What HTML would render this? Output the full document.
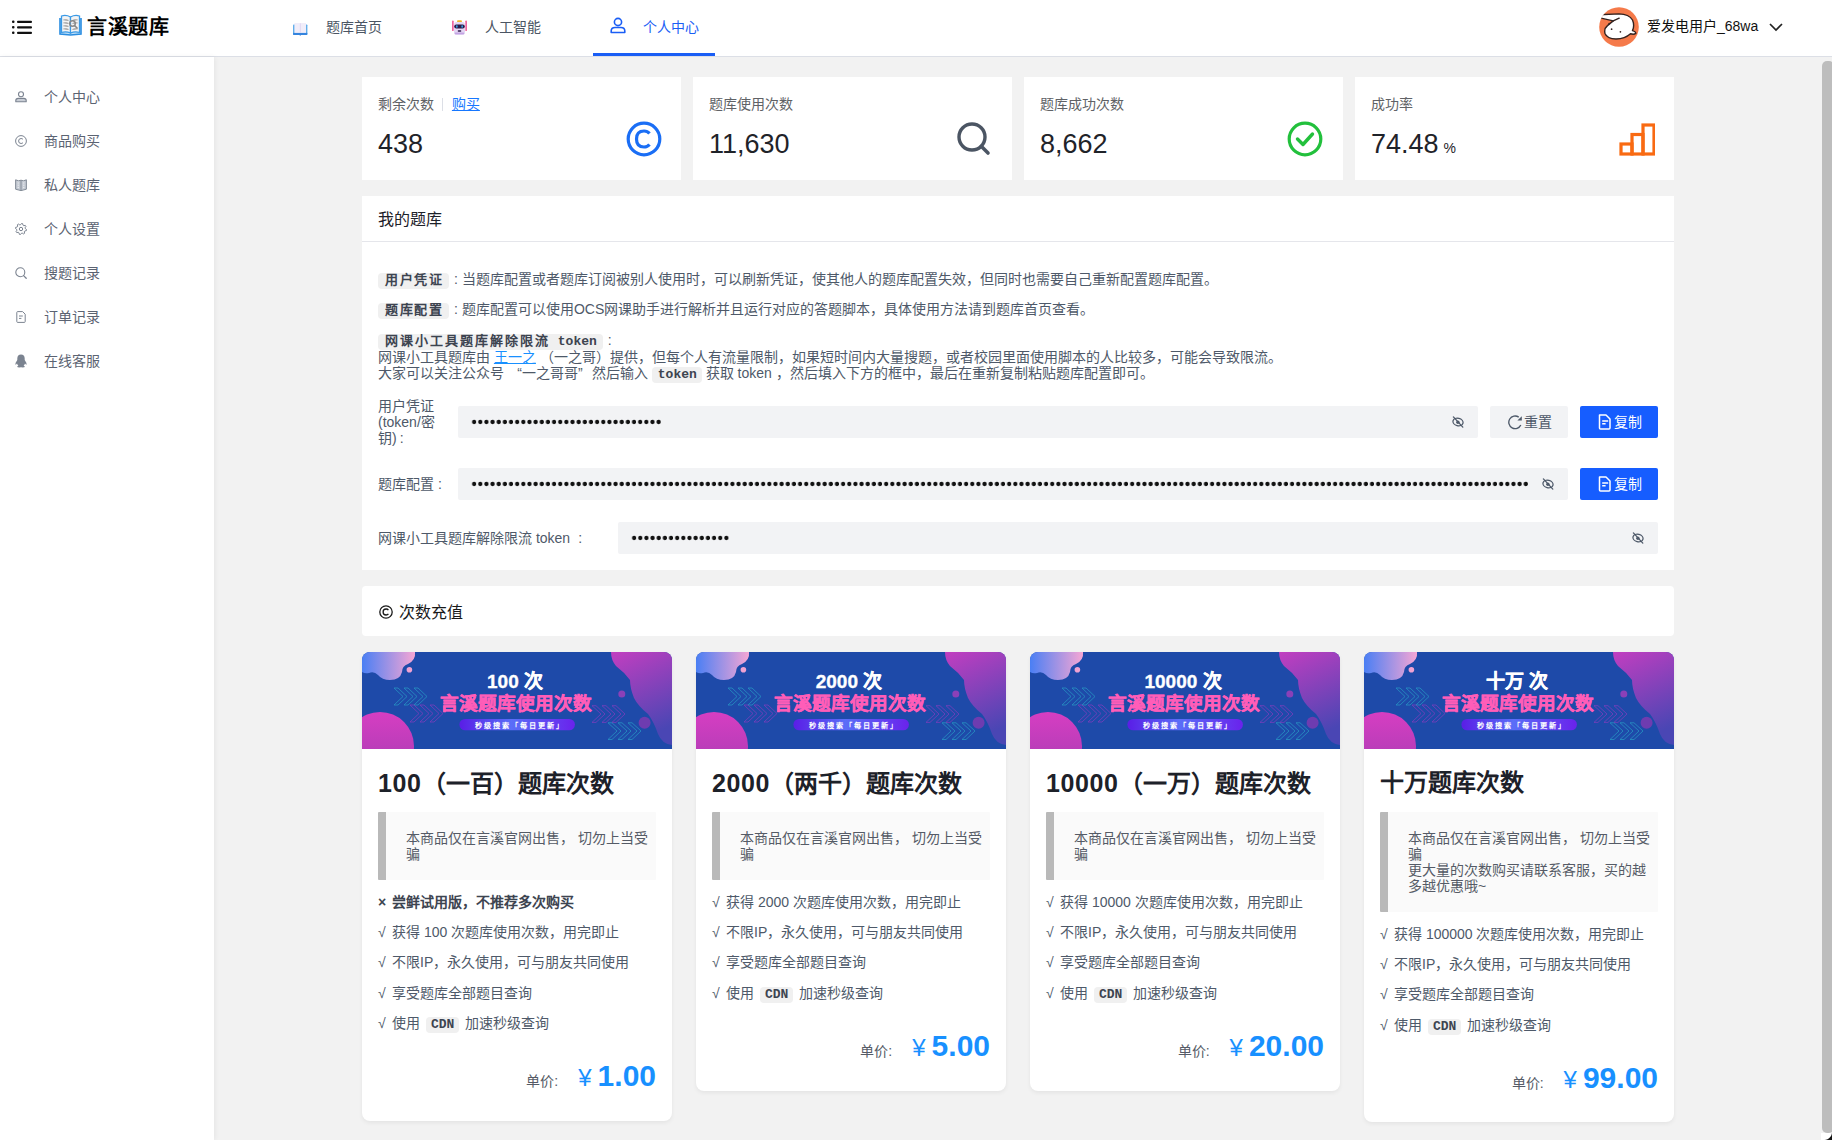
<!DOCTYPE html>
<html lang="zh-CN"><head><meta charset="utf-8">
<style>
*{box-sizing:border-box;margin:0;padding:0}
html,body{width:1832px;height:1140px;overflow:hidden;background:#f2f2f2;font-family:"Liberation Sans",sans-serif;color:#303133}
.abs{position:absolute}
#hdr{position:absolute;left:0;top:0;width:1832px;height:57px;background:#fff;border-bottom:1px solid #dcdfe6}
#side{position:absolute;left:0;top:57px;width:214px;height:1083px;background:#fff;box-shadow:1px 0 5px rgba(0,0,0,0.06)}
.nav{position:absolute;top:0;height:56px;font-size:14px;color:#4b5563;line-height:54px;white-space:nowrap}
.sitem{position:absolute;left:0;width:214px;height:44px;font-size:14px;color:#5b6372;line-height:44px}
.sitem svg{position:absolute;left:15px;top:16px}
.sitem span{position:absolute;left:44px;top:0}
.card{position:absolute;background:#fff}
.stat .lbl{position:absolute;left:16px;top:19px;font-size:14px;color:#606266;line-height:16px;white-space:nowrap}
.stat .val{position:absolute;left:16px;top:51px;font-size:27px;color:#1f2329;line-height:32px;white-space:nowrap}
.stat svg{position:absolute}

.para{position:absolute;left:16px;font-size:14px;color:#4e5969;line-height:16px;white-space:nowrap}
.pill{display:inline-block;background:#f0f0f0;border-radius:4px;font-weight:bold;font-size:13px;letter-spacing:1.5px;padding:0 6px 0 7px;line-height:16px;color:#3d4450;font-family:"Liberation Mono",monospace}
.flbl{position:absolute;left:16px;font-size:14px;color:#4e5969;line-height:16px}
.inp{position:absolute;height:32px;background:#f2f3f5;border-radius:2px}
.dots{position:absolute;left:14px;top:0;line-height:32px;font-size:12px;color:#111;letter-spacing:-0.5px;white-space:nowrap;overflow:hidden}
.eye{position:absolute;top:10px;height:12px}
.eye svg{display:block}
.btn{position:absolute;height:32px;width:78px;border-radius:2px;font-size:14px;line-height:32px;white-space:nowrap}
.btn.blue{background:#165dff;color:#fff}
.btn.grey{background:#f2f3f5;color:#4e5969}

.pcard{position:absolute;top:652px;width:310px;background:#fff;border-radius:8px;box-shadow:0 2px 4px rgba(0,0,0,0.06);overflow:hidden}
.pcard .ban{position:absolute;left:0;top:0;width:310px;height:97px}
.pcard .ttl{position:absolute;left:16px;top:116px;font-size:24px;font-weight:bold;color:#1d2129;line-height:30px;white-space:nowrap}
.pcard .quote{position:absolute;left:16px;top:160px;width:278px;background:#fafafa;border-left:8px solid #b9b9b9;padding:18px 0 18px 20px;font-size:14px;line-height:16px;color:#555b66;border-radius:1px}
.pcard .ck{display:inline-block;width:14px}
.pcard .li{position:absolute;left:16px;font-size:14px;color:#4e5969;line-height:18px;white-space:nowrap}
.pcard .cdn{display:inline-block;background:#f0f0f0;border-radius:4px;font-family:"Liberation Mono",monospace;font-weight:bold;font-size:13px;line-height:16px;padding:0 5px;color:#3d4450;margin:0 2px}
.pcard .price{position:absolute;right:16px;white-space:nowrap;line-height:34px;font-size:30px;height:34px}
.pcard .price .u{font-size:14px;color:#555b66;margin-right:20px}
.pcard .price .y{font-size:24px;color:#1890ff;margin-right:6px}
.pcard .price .n{font-size:30px;font-weight:bold;color:#1890ff}
</style></head><body>

<!-- HEADER -->
<div id="hdr">
  <svg class="abs" style="left:12px;top:20px" width="20" height="15" viewBox="0 0 20 15"><g fill="#111"><rect x="0" y="0.5" width="2.5" height="2.5" rx="1"/><rect x="0" y="6" width="2.5" height="2.5" rx="1"/><rect x="0" y="11.5" width="2.5" height="2.5" rx="1"/><rect x="5" y="0.7" width="15" height="2.2" rx="1"/><rect x="5" y="6.2" width="15" height="2.2" rx="1"/><rect x="5" y="11.7" width="15" height="2.2" rx="1"/></g></svg>
  <svg class="abs" style="left:59px;top:14px" width="23" height="22" viewBox="0 0 23 22"><path d="M1 4 L1 20 L11.5 21 L22 20 L22 4" fill="#bfe0f7" stroke="#2a8de0" stroke-width="1.6"/><path d="M2.5 2 Q7 0.5 11.5 3 L11.5 19 Q7 17 2.5 18.5 Z" fill="#f4f4f4" stroke="#3b9ae6" stroke-width="1.3"/><path d="M20.5 2 Q16 0.5 11.5 3 L11.5 19 Q16 17 20.5 18.5 Z" fill="#f4f4f4" stroke="#3b9ae6" stroke-width="1.3"/><g stroke="#c8c8c8" stroke-width="0.9"><path d="M4 6 Q7 5 10 6.5M4 9 Q7 8 10 9.5M4 12 Q7 11 10 12.5M4 15 Q7 14 10 15.5M13 6.5 Q16 5 19 6M13 9.5Q16 8 19 9M13 15.5 Q16 14 19 15"/></g><circle cx="13.5" cy="9.5" r="2.8" fill="none" stroke="#888" stroke-width="1.4"/><path d="M15.5 11.5 L18.5 14.5" stroke="#888" stroke-width="1.6"/></svg>
  <div class="abs" style="left:87px;top:14px;font-size:20px;font-weight:bold;color:#000;line-height:26px;letter-spacing:0.5px">言溪题库</div>

  <div class="nav" style="left:292px">
    <svg class="abs" style="left:0.5px;top:22.5px" width="15" height="13" viewBox="0 0 15 13"><rect x="0" y="1.4" width="14.4" height="10.4" rx="0.8" fill="#62aeea"/><rect x="0" y="9.8" width="14.4" height="2.2" rx="0.8" fill="#3584de"/><rect x="1.4" y="0" width="11.6" height="9.9" fill="#f1edf9"/><rect x="6.9" y="0.3" width="0.7" height="9.4" fill="#d9d0ef"/><path d="M6.5 11.9 L7.2 12.9 L7.9 11.9Z" fill="#3584de"/></svg>
    <span class="abs" style="left:34px">题库首页</span>
  </div>
  <div class="nav" style="left:452px">
    <svg class="abs" style="left:-0.5px;top:19.5px" width="15" height="15" viewBox="0 0 15 15"><rect x="0" y="0.4" width="1.7" height="10.6" rx="0.85" fill="#f0649e"/><rect x="13.3" y="0.4" width="1.7" height="10.6" rx="0.85" fill="#f0649e"/><rect x="5" y="0.2" width="5" height="2.2" rx="1.1" fill="#f3b52a"/><rect x="2" y="2" width="11" height="12.4" rx="2.6" fill="#e4d6f3"/><rect x="2.6" y="12.6" width="9.8" height="1.8" rx="0.9" fill="#c3a3e3"/><rect x="2.2" y="4.4" width="10.6" height="4.2" rx="2.1" fill="#2d1a48"/><rect x="4.1" y="5.3" width="1.5" height="2.4" rx="0.7" fill="#36aef0"/><rect x="9.4" y="5.3" width="1.5" height="2.4" rx="0.7" fill="#36aef0"/><rect x="5.7" y="10.3" width="3.6" height="1.4" rx="0.7" fill="#2d1a48"/></svg>
    <span class="abs" style="left:33px">人工智能</span>
  </div>
  <div class="nav" style="left:593px;width:122px;color:#1a5ef5">
    <svg class="abs" style="left:17px;top:17px" width="16" height="17" viewBox="0 0 16 17"><circle cx="8" cy="5" r="3.6" fill="none" stroke="#1a5ef5" stroke-width="1.6"/><path d="M1.2 15.5 L1.2 14 Q1.2 10.5 5 10.5 L11 10.5 Q14.8 10.5 14.8 14 L14.8 15.5 Z" fill="none" stroke="#1a5ef5" stroke-width="1.6" stroke-linejoin="round"/></svg>
    <span class="abs" style="left:50px">个人中心</span>
    <div class="abs" style="left:0;top:53px;width:122px;height:3px;background:#1a5ef5"></div>
  </div>

  <svg class="abs" style="left:1599px;top:6.5px" width="40" height="40" viewBox="0 0 40 40"><defs><clipPath id="avc"><circle cx="20" cy="20" r="19.8"/></clipPath></defs><circle cx="20" cy="20" r="19.8" fill="#f57a4a"/><g clip-path="url(#avc)" stroke="#33221f" stroke-width="1.4" stroke-linejoin="round" stroke-linecap="round"><path d="M-1 7.8 L20 6.9 Q30 7.2 33.5 13 Q35.8 18.5 33.5 23.6 Q36.5 24.3 36.9 26.2 Q35.2 27.8 31.5 26.8 Q26 31.8 17 32 Q8 31.8 6 26.5 Q4.8 21.5 8.5 18.6 L14.2 13.9 L-1 10.4 Z" fill="#fff"/><path d="M14.2 13.9 L20.2 11.2" fill="none"/><circle cx="10.2" cy="16.6" r="0.9" fill="#33221f" stroke="none"/><circle cx="12.6" cy="22.2" r="0.85" fill="#33221f" stroke="none"/><circle cx="21.4" cy="24.8" r="0.85" fill="#33221f" stroke="none"/></g></svg>
  <div class="abs" style="left:1647px;top:18px;font-size:14px;line-height:17px;color:#111;white-space:nowrap">爱发电用户_68wa</div>
  <svg class="abs" style="left:1769px;top:22px" width="14" height="10" viewBox="0 0 14 10"><path d="M1 2 L7 8 L13 2" fill="none" stroke="#222" stroke-width="1.7"/></svg>
</div>

<!-- SIDEBAR -->
<div id="side">
  <div class="sitem" style="top:18px"><svg width="12" height="12" viewBox="0 0 12 12"><circle cx="6" cy="3.2" r="2.5" fill="none" stroke="#7b8390" stroke-width="1.1"/><path d="M0.8 10.8 L0.8 9.6 Q0.8 7.4 3.2 7.4 L8.8 7.4 Q11.2 7.4 11.2 9.6 L11.2 10.8 Z" fill="#c9ced6" stroke="#7b8390" stroke-width="1.1" stroke-linejoin="round"/></svg><span>个人中心</span></div>
  <div class="sitem" style="top:62px"><svg width="12" height="12" viewBox="0 0 12 12"><circle cx="6" cy="6" r="5.4" fill="none" stroke="#7b8390" stroke-width="1"/><path d="M8 4.4 Q7.3 3.5 6.1 3.5 Q3.6 3.5 3.6 6 Q3.6 8.5 6.1 8.5 Q7.3 8.5 8 7.6" fill="none" stroke="#7b8390" stroke-width="1"/></svg><span>商品购买</span></div>
  <div class="sitem" style="top:106px"><svg width="12" height="12" viewBox="0 0 12 12"><path d="M0.6 0.8 L3.5 1.8 L6 1.2 L8.5 1.8 L11.4 0.8 L11.4 10.2 L8.5 11 L6 11.6 L3.5 11 L0.6 10.2 Z" fill="#c3c9d2" stroke="#7b8390" stroke-width="0.9" stroke-linejoin="round"/><path d="M6 1.4 L6 11.4" stroke="#7b8390" stroke-width="0.9"/><path d="M3.2 2.6 L3.2 10 M8.8 2.6 L8.8 10" stroke="#fff" stroke-width="0.8" stroke-dasharray="1 0.8"/></svg><span>私人题库</span></div>
  <div class="sitem" style="top:150px"><svg width="12" height="12" viewBox="0 0 12 12"><path d="M6.55 0.43 L7.63 0.64 L8.03 2.21 L8.73 2.68 L10.33 2.45 L10.94 3.36 L10.11 4.75 L10.28 5.58 L11.57 6.55 L11.36 7.63 L9.79 8.03 L9.32 8.73 L9.55 10.33 L8.64 10.94 L7.25 10.11 L6.42 10.28 L5.45 11.57 L4.37 11.36 L3.97 9.79 L3.27 9.32 L1.67 9.55 L1.06 8.64 L1.89 7.25 L1.72 6.42 L0.43 5.45 L0.64 4.37 L2.21 3.97 L2.68 3.27 L2.45 1.67 L3.36 1.06 L4.75 1.89 L5.58 1.72Z" fill="none" stroke="#7b8390" stroke-width="1" stroke-linejoin="round"/><circle cx="6" cy="6" r="1.7" fill="none" stroke="#7b8390" stroke-width="1"/></svg><span>个人设置</span></div>
  <div class="sitem" style="top:194px"><svg width="12" height="12" viewBox="0 0 12 12"><circle cx="5.3" cy="5.3" r="4.5" fill="none" stroke="#7b8390" stroke-width="1.1"/><path d="M8.6 8.6 L11.2 11.2" stroke="#7b8390" stroke-width="1.3" stroke-linecap="round"/></svg><span>搜题记录</span></div>
  <div class="sitem" style="top:238px"><svg width="12" height="12" viewBox="0 0 12 12"><path d="M1.8 1.4 Q1.8 0.6 2.6 0.6 L7.6 0.6 L10.2 3.2 L10.2 10.6 Q10.2 11.4 9.4 11.4 L2.6 11.4 Q1.8 11.4 1.8 10.6 Z" fill="none" stroke="#7b8390" stroke-width="1" stroke-linejoin="round"/><path d="M4 5 L7.8 5 M4 7.4 L6.4 7.4" stroke="#7b8390" stroke-width="1"/></svg><span>订单记录</span></div>
  <div class="sitem" style="top:282px"><svg width="12" height="14" viewBox="0 0 12 14" style="top:15px"><path d="M6 0.4 Q9.6 0.4 9.7 4.6 L9.7 6 Q11.9 8.8 11.5 11 Q10.6 10.5 10 9.6 Q9.6 11 8.6 11.8 Q10 12.3 9.8 13 Q9 13.6 6 13.3 Q3 13.6 2.2 13 Q2 12.3 3.4 11.8 Q2.4 11 2 9.6 Q1.4 10.5 0.5 11 Q0.1 8.8 2.3 6 L2.3 4.6 Q2.4 0.4 6 0.4Z" fill="#7b8390"/></svg><span>在线客服</span></div>
</div>

<!-- STAT CARDS -->
<div class="card stat" style="left:362px;top:77px;width:319px;height:103px">
  <div class="lbl">剩余次数 <span style="display:inline-block;width:1px;height:13px;background:#dcdfe6;margin:0 9px 0 4px;vertical-align:-2px"></span><span style="color:#1677ff;text-decoration:underline">购买</span></div>
  <div class="val">438</div>
  <svg style="left:264px;top:44px" width="36" height="36" viewBox="0 0 36 36"><circle cx="18" cy="18" r="15.8" fill="none" stroke="#1a6ef5" stroke-width="3.2"/><path d="M23.5 12.5 Q21.5 10 18 10 Q10.5 10 10.5 18 Q10.5 26 18 26 Q21.5 26 23.5 23.5" fill="none" stroke="#1a6ef5" stroke-width="3.2"/></svg>
</div>
<div class="card stat" style="left:693px;top:77px;width:319px;height:103px">
  <div class="lbl">题库使用次数</div>
  <div class="val">11,630</div>
  <svg style="left:263px;top:44px" width="36" height="36" viewBox="0 0 36 36"><circle cx="16" cy="16" r="13" fill="none" stroke="#4b5563" stroke-width="3.4"/><path d="M25.5 25.5 L32 32" stroke="#4b5563" stroke-width="3.6" stroke-linecap="round"/></svg>
</div>
<div class="card stat" style="left:1024px;top:77px;width:319px;height:103px">
  <div class="lbl">题库成功次数</div>
  <div class="val">8,662</div>
  <svg style="left:263px;top:44px" width="36" height="36" viewBox="0 0 36 36"><circle cx="18" cy="18" r="15.8" fill="none" stroke="#22c03c" stroke-width="3.2"/><path d="M10.5 18 L16 23.5 L25.5 13" fill="none" stroke="#22c03c" stroke-width="3.4" stroke-linecap="round" stroke-linejoin="round"/></svg>
</div>
<div class="card stat" style="left:1355px;top:77px;width:319px;height:103px">
  <div class="lbl">成功率</div>
  <div class="val">74.48<span style="font-size:14px;margin-left:5px">%</span></div>
  <svg style="left:264px;top:44px" width="36" height="36" viewBox="0 0 36 36"><g fill="none" stroke="#f96a12" stroke-width="3.2"><rect x="2" y="23" width="11" height="10"/><rect x="13" y="13.5" width="11" height="19.5"/><rect x="24" y="4" width="11" height="29"/></g></svg>
</div>


<!-- MY BANK CARD -->
<div class="card" style="left:362px;top:196px;width:1312px;height:374px">
  <div class="abs" style="left:16px;top:14px;font-size:16px;line-height:20px;color:#1d2129">我的题库</div>
  <div class="abs" style="left:0;top:45px;width:1312px;height:1px;background:#e5e6eb"></div>
  <div class="para" style="top:75px"><span class="pill">用户凭证</span><span style="margin:0 4px 0 5px">:</span>当题库配置或者题库订阅被别人使用时，可以刷新凭证，使其他人的题库配置失效，但同时也需要自己重新配置题库配置。</div>
  <div class="para" style="top:105px"><span class="pill">题库配置</span><span style="margin:0 4px 0 5px">:</span>题库配置可以使用OCS网课助手进行解析并且运行对应的答题脚本，具体使用方法请到题库首页查看。</div>
  <div class="para" style="top:136px"><span class="pill" style="letter-spacing:2px">网课小工具题库解除限流<span style="letter-spacing:0"> token</span></span><span style="margin:0 4px 0 5px">:</span></div>
  <div class="para" style="top:153px">网课小工具题库由 <span style="color:#1890ff;text-decoration:underline">王一之</span> （一之哥）提供，但每个人有流量限制，如果短时间内大量搜题，或者校园里面使用脚本的人比较多，可能会导致限流。</div>
  <div class="para" style="top:169px">大家可以关注公众号 <span style="display:inline-block;width:14px;text-align:right">“</span>一之哥哥<span style="display:inline-block;width:14px;text-align:left">”</span>然后输入 <span class="pill" style="letter-spacing:0;padding:0 5px 0 6px">token</span> 获取 token <span style="display:inline-block;width:14px">，</span>然后填入下方的框中，最后在重新复制粘贴题库配置即可。</div>

  <div class="flbl" style="top:202px">用户凭证<br>(token/密<br>钥)<span style="margin-left:3px">:</span></div>
  <div class="inp" style="left:96px;top:210px;width:1020px"><svg class="abs" style="left:12px;top:0" width="191" height="32"><rect width="191" height="32" fill="url(#dp)"/></svg><div class="eye" style="left:994px"><svg width="12" height="12" viewBox="0 0 12 12"><ellipse cx="6" cy="6" rx="5.1" ry="3.7" transform="rotate(15 6 6)" fill="none" stroke="#4e5969" stroke-width="1.3"/><circle cx="5.9" cy="6.2" r="1.7" fill="#4e5969"/><path d="M1.4 0.9 L10.8 11.1" stroke="#4e5969" stroke-width="1.3" stroke-linecap="round"/></svg></div></div>
  <div class="btn grey" style="left:1128px;top:210px"><svg class="abs" style="left:18px;top:9px" width="15" height="15" viewBox="0 0 15 15"><path d="M12.81 9.96 A6.3 6.3 0 1 1 10.71 2.14" fill="none" stroke="#4e5969" stroke-width="1.35"/><path d="M13.8 1.2 L13.8 5.6 L9.4 5.6 Z" fill="#4e5969"/></svg><span class="abs" style="left:34px">重置</span></div>
  <div class="btn blue" style="left:1218px;top:210px"><svg class="abs" style="left:18px;top:8px" width="13" height="16" viewBox="0 0 13 16"><path d="M1.5 1 L8 1 L12 5 L12 14 Q12 15 11 15 L2.5 15 Q1.5 15 1.5 14 Z" fill="none" stroke="#fff" stroke-width="1.5" stroke-linejoin="round"/><path d="M4.2 6.9 L10.2 6.9 M4.2 9.8 L7.6 9.8" stroke="#fff" stroke-width="1.5"/></svg><span class="abs" style="left:34px">复制</span></div>

  <div class="flbl" style="top:280px">题库配置<span style="margin-left:4px">:</span></div>
  <div class="inp" style="left:96px;top:272px;width:1110px"><svg class="abs" style="left:12px;top:0" width="1058" height="32"><rect width="1058" height="32" fill="url(#dp)"/></svg><div class="eye" style="left:1084px"><svg width="12" height="12" viewBox="0 0 12 12"><ellipse cx="6" cy="6" rx="5.1" ry="3.7" transform="rotate(15 6 6)" fill="none" stroke="#4e5969" stroke-width="1.3"/><circle cx="5.9" cy="6.2" r="1.7" fill="#4e5969"/><path d="M1.4 0.9 L10.8 11.1" stroke="#4e5969" stroke-width="1.3" stroke-linecap="round"/></svg></div></div>
  <div class="btn blue" style="left:1218px;top:272px"><svg class="abs" style="left:18px;top:8px" width="13" height="16" viewBox="0 0 13 16"><path d="M1.5 1 L8 1 L12 5 L12 14 Q12 15 11 15 L2.5 15 Q1.5 15 1.5 14 Z" fill="none" stroke="#fff" stroke-width="1.5" stroke-linejoin="round"/><path d="M4.2 6.9 L10.2 6.9 M4.2 9.8 L7.6 9.8" stroke="#fff" stroke-width="1.5"/></svg><span class="abs" style="left:34px">复制</span></div>

  <div class="flbl" style="top:334px;white-space:nowrap">网课小工具题库解除限流 token<span style="margin-left:8px">:</span></div>
  <div class="inp" style="left:256px;top:326px;width:1040px"><svg class="abs" style="left:12px;top:0" width="99" height="32"><rect width="99" height="32" fill="url(#dp)"/></svg><div class="eye" style="left:1014px"><svg width="12" height="12" viewBox="0 0 12 12"><ellipse cx="6" cy="6" rx="5.1" ry="3.7" transform="rotate(15 6 6)" fill="none" stroke="#4e5969" stroke-width="1.3"/><circle cx="5.9" cy="6.2" r="1.7" fill="#4e5969"/><path d="M1.4 0.9 L10.8 11.1" stroke="#4e5969" stroke-width="1.3" stroke-linecap="round"/></svg></div></div>
</div>

<!-- RECHARGE TITLE -->
<div class="card" style="left:362px;top:586px;width:1312px;height:50px;border-radius:4px">
  <svg class="abs" style="left:17px;top:18.5px" width="14" height="14" viewBox="0 0 14 14"><circle cx="7" cy="7" r="6.2" fill="none" stroke="#1a1a1a" stroke-width="1.3"/><path d="M9.4 5.1 Q8.7 4 7.1 4 Q4.1 4 4.1 7 Q4.1 10 7.1 10 Q8.7 10 9.4 8.9" fill="none" stroke="#1a1a1a" stroke-width="1.3"/></svg><div class="abs" style="left:37px;top:16.5px;font-size:16px;line-height:20px;color:#1a1a1a;white-space:nowrap">次数充值</div>
</div>

<svg width="0" height="0" style="position:absolute">
<defs>
<linearGradient id="gTL" x1="0" y1="0" x2="1" y2="0"><stop offset="0" stop-color="#4a7ff4"/><stop offset="1" stop-color="#f6a6d4"/></linearGradient>
<linearGradient id="gBL" x1="0" y1="0" x2="0" y2="1"><stop offset="0" stop-color="#d63ec2"/><stop offset="1" stop-color="#a43cb2"/></linearGradient>
<linearGradient id="gR" x1="0" y1="0" x2="0.3" y2="1"><stop offset="0" stop-color="#c23ec0"/><stop offset="1" stop-color="#4a46b4"/></linearGradient>
<linearGradient id="gP" x1="0" y1="0" x2="1" y2="0"><stop offset="0" stop-color="#5a1de6"/><stop offset="0.45" stop-color="#5a6ef8"/><stop offset="1" stop-color="#6a22ec"/></linearGradient>
<pattern id="dp" width="6.15" height="32" patternUnits="userSpaceOnUse"><circle cx="4.1" cy="16" r="2.15" fill="#111"/></pattern>
<symbol id="bnr" viewBox="0 0 310 97">
<rect width="310" height="97" fill="#1e4aa9"/>
<path d="M0 0 L53 0 Q54 8 46 12 Q40 14 40 20 Q38 28 28 28 Q20 28 16 23 Q12 19 7 21 Q3 22 0 20 Z" fill="url(#gTL)"/>
<circle cx="47.4" cy="17.7" r="2.8" fill="#f0a2d2"/>
<circle cx="18" cy="94" r="34" fill="url(#gBL)"/>
<path d="M249 0 L310 0 L310 93 Q300 92 296 82 Q292 70 286 62 Q276 54 272 46 Q268 36 268 28 Q262 20 254 14 Q249 8 249 0 Z" fill="url(#gR)"/>
<circle cx="259.8" cy="41.9" r="3.5" fill="#8a40b8"/>
<circle cx="282.6" cy="70.8" r="6" fill="#6e3cb0"/>
<g fill="none" stroke-width="0.8" opacity="0.85">
<path stroke="#2aa0c8" d="M32 36 L41 44.5 L32 53 L36 53 L45 44.5 L36 36 Z M42 36 L51 44.5 L42 53 L46 53 L55 44.5 L46 36 Z M52 36 L61 44.5 L52 53 L56 53 L65 44.5 L56 36 Z"/>
<path stroke="#8a3cc0" d="M48 53 L57 61.5 L48 70 L52 70 L61 61.5 L52 53 Z M58 53 L67 61.5 L58 70 L62 70 L71 61.5 L62 53 Z M68 53 L77 61.5 L68 70 L72 70 L81 61.5 L72 53 Z"/>
<path stroke="#8a3cc0" d="M230 53.7 L239 62 L230 70.4 L234 70.4 L243 62 L234 53.7 Z M240 53.7 L249 62 L240 70.4 L244 70.4 L253 62 L244 53.7 Z M250 53.7 L259 62 L250 70.4 L254 70.4 L263 62 L254 53.7 Z"/>
<path stroke="#2aa0c8" d="M246 70.8 L255 79 L246 87.5 L250 87.5 L259 79 L250 70.8 Z M256 70.8 L265 79 L256 87.5 L260 87.5 L269 79 L260 70.8 Z M266 70.8 L275 79 L266 87.5 L270 87.5 L279 79 L270 70.8 Z"/>
</g>
<rect x="97.4" y="66.9" width="115.5" height="11.4" rx="5.7" fill="url(#gP)"/>
<text x="157.5" y="75.6" text-anchor="middle" font-size="7.2" font-weight="bold" fill="#fff" letter-spacing="2" font-family="Liberation Sans, sans-serif">秒级搜索「每日更新」</text>
<text x="154" y="58.2" text-anchor="middle" font-size="18.6" font-weight="bold" fill="#ff5db8" stroke="#ff5db8" stroke-width="0.4" font-family="Liberation Sans, sans-serif">言溪题库使用次数</text>
</symbol>
</defs></svg>
<div class="pcard" style="left:362px;height:469px"><svg class="ban" viewBox="0 0 310 97"><use href="#bnr"/><text x="153" y="35.7" text-anchor="middle" font-size="19" font-weight="bold" fill="#fff" stroke="#fff" stroke-width="0.35" font-family="Liberation Sans, sans-serif">100 次</text></svg>
<div class="ttl"><span style="font-size:25px;letter-spacing:0.6px">100</span>（一百）题库次数</div>
<div class="quote" style="height:68px">本商品仅在言溪官网出售， 切勿上当受<br>骗</div>
<div class="li" style="top:241px;font-weight:bold;color:#3d4450"><span class="ck">×</span>尝鲜试用版，不推荐多次购买</div><div class="li" style="top:271px"><span class="ck">√</span>获得 100 次题库使用次数，用完即止</div><div class="li" style="top:301px"><span class="ck">√</span>不限IP，永久使用，可与朋友共同使用</div><div class="li" style="top:332px"><span class="ck">√</span>享受题库全部题目查询</div><div class="li" style="top:362px"><span class="ck">√</span>使用 <span class="cdn">CDN</span> 加速秒级查询</div>
<div class="price" style="top:406.6px"><span class="u">单价:</span><span class="y">¥</span><span class="n">1.00</span></div>
</div><div class="pcard" style="left:696px;height:439px"><svg class="ban" viewBox="0 0 310 97"><use href="#bnr"/><text x="153" y="35.7" text-anchor="middle" font-size="19" font-weight="bold" fill="#fff" stroke="#fff" stroke-width="0.35" font-family="Liberation Sans, sans-serif">2000 次</text></svg>
<div class="ttl"><span style="font-size:25px;letter-spacing:0.6px">2000</span>（两千）题库次数</div>
<div class="quote" style="height:68px">本商品仅在言溪官网出售， 切勿上当受<br>骗</div>
<div class="li" style="top:241px"><span class="ck">√</span>获得 2000 次题库使用次数，用完即止</div><div class="li" style="top:271px"><span class="ck">√</span>不限IP，永久使用，可与朋友共同使用</div><div class="li" style="top:301px"><span class="ck">√</span>享受题库全部题目查询</div><div class="li" style="top:332px"><span class="ck">√</span>使用 <span class="cdn">CDN</span> 加速秒级查询</div>
<div class="price" style="top:376.6px"><span class="u">单价:</span><span class="y">¥</span><span class="n">5.00</span></div>
</div><div class="pcard" style="left:1030px;height:439px"><svg class="ban" viewBox="0 0 310 97"><use href="#bnr"/><text x="153" y="35.7" text-anchor="middle" font-size="19" font-weight="bold" fill="#fff" stroke="#fff" stroke-width="0.35" font-family="Liberation Sans, sans-serif">10000 次</text></svg>
<div class="ttl"><span style="font-size:25px;letter-spacing:0.6px">10000</span>（一万）题库次数</div>
<div class="quote" style="height:68px">本商品仅在言溪官网出售， 切勿上当受<br>骗</div>
<div class="li" style="top:241px"><span class="ck">√</span>获得 10000 次题库使用次数，用完即止</div><div class="li" style="top:271px"><span class="ck">√</span>不限IP，永久使用，可与朋友共同使用</div><div class="li" style="top:301px"><span class="ck">√</span>享受题库全部题目查询</div><div class="li" style="top:332px"><span class="ck">√</span>使用 <span class="cdn">CDN</span> 加速秒级查询</div>
<div class="price" style="top:376.6px"><span class="u">单价:</span><span class="y">¥</span><span class="n">20.00</span></div>
</div><div class="pcard" style="left:1364px;height:470px"><svg class="ban" viewBox="0 0 310 97"><use href="#bnr"/><text x="153" y="35.7" text-anchor="middle" font-size="19" font-weight="bold" fill="#fff" stroke="#fff" stroke-width="0.35" font-family="Liberation Sans, sans-serif">十万 次</text></svg>
<div class="ttl">十万题库次数</div>
<div class="quote" style="height:100px">本商品仅在言溪官网出售， 切勿上当受<br>骗<br>更大量的次数购买请联系客服，买的越<br>多越优惠哦~</div>
<div class="li" style="top:273px"><span class="ck">√</span>获得 100000 次题库使用次数，用完即止</div><div class="li" style="top:303px"><span class="ck">√</span>不限IP，永久使用，可与朋友共同使用</div><div class="li" style="top:333px"><span class="ck">√</span>享受题库全部题目查询</div><div class="li" style="top:364px"><span class="ck">√</span>使用 <span class="cdn">CDN</span> 加速秒级查询</div>
<div class="price" style="top:408.6px"><span class="u">单价:</span><span class="y">¥</span><span class="n">99.00</span></div>
</div><div class="abs" style="left:1822px;top:61px;width:12px;height:1072px;background:#bdbdbd;border-radius:5px"></div>
<div class="abs" style="left:1821px;top:1133px;width:11px;height:7px;background:#fff"></div>
<div class="abs" style="left:1824px;top:1132px;width:8px;height:8px;background:radial-gradient(circle at 0 0, transparent 7.5px, #151515 8.5px)"></div>
</body></html>
